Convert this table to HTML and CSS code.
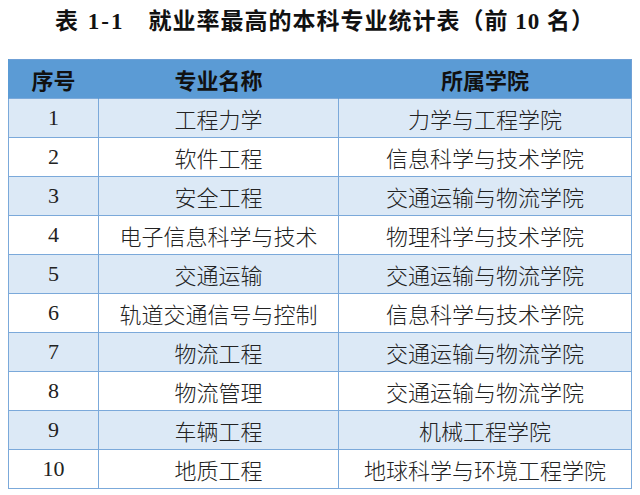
FILE: index.html
```html
<!DOCTYPE html>
<html lang="zh-CN">
<head>
<meta charset="utf-8">
<link rel="stylesheet" href="styles.css">
</head>
<body>
<h1 class="title"><span class="tno">表 1-1</span>就业率最高的本科专业统计表（前 10 名）</h1>
<table class="rank">
  <thead>
    <tr><th class="c1">序号</th><th class="c2">专业名称</th><th class="c3">所属学院</th></tr>
  </thead>
  <tbody>
    <tr class="alt"><td>1</td><td>工程力学</td><td>力学与工程学院</td></tr>
    <tr><td>2</td><td>软件工程</td><td>信息科学与技术学院</td></tr>
    <tr class="alt"><td>3</td><td>安全工程</td><td>交通运输与物流学院</td></tr>
    <tr><td>4</td><td>电子信息科学与技术</td><td>物理科学与技术学院</td></tr>
    <tr class="alt"><td>5</td><td>交通运输</td><td>交通运输与物流学院</td></tr>
    <tr><td>6</td><td>轨道交通信号与控制</td><td>信息科学与技术学院</td></tr>
    <tr class="alt"><td>7</td><td>物流工程</td><td>交通运输与物流学院</td></tr>
    <tr><td>8</td><td>物流管理</td><td>交通运输与物流学院</td></tr>
    <tr class="alt"><td>9</td><td>车辆工程</td><td>机械工程学院</td></tr>
    <tr><td>10</td><td>地质工程</td><td>地球科学与环境工程学院</td></tr>
  </tbody>
</table>
</body>
</html>
```
FILE: styles.css
```css
html, body {
  margin: 0;
  padding: 0;
  background: #ffffff;
}
body {
  padding: 0 8px;
  font-family: "Liberation Serif", "Noto Sans CJK SC", serif;
  color: #1a1a1a;
}
.title {
  margin: 0;
  padding: 8px 0 0 47px;
  height: 50px;
  box-sizing: border-box;
  font-size: 23px;
  line-height: 28px;
  font-weight: bold;
  color: #111;
  font-family: "Liberation Serif", "Noto Sans CJK SC", serif;
  letter-spacing: 1px;
}
.tno {
  margin-right: 24px;
  letter-spacing: 2px;
}
.rank {
  width: 624px;
  border-collapse: collapse;
  table-layout: fixed;
  border: 1px solid #6fa0d6;
  margin-top: 9px;
}
.rank th {
  background: #5b9bd5;
  height: 38px;
  padding: 0;
  font-family: "Noto Sans CJK SC", sans-serif;
  font-size: 22px;
  font-weight: bold;
  color: #111;
  border-left: 1px solid #5b9bd5;
}
.rank .c1 { width: 89px; }
.rank .c2 { width: 239px; }
.rank td {
  height: 38px;
  padding: 0;
  text-align: center;
  font-size: 22px;
  font-weight: 300;
  color: #222;
  border: 1px solid #7ba9da;
}
.rank tr.alt td {
  background: #dce9f6;
}
```
